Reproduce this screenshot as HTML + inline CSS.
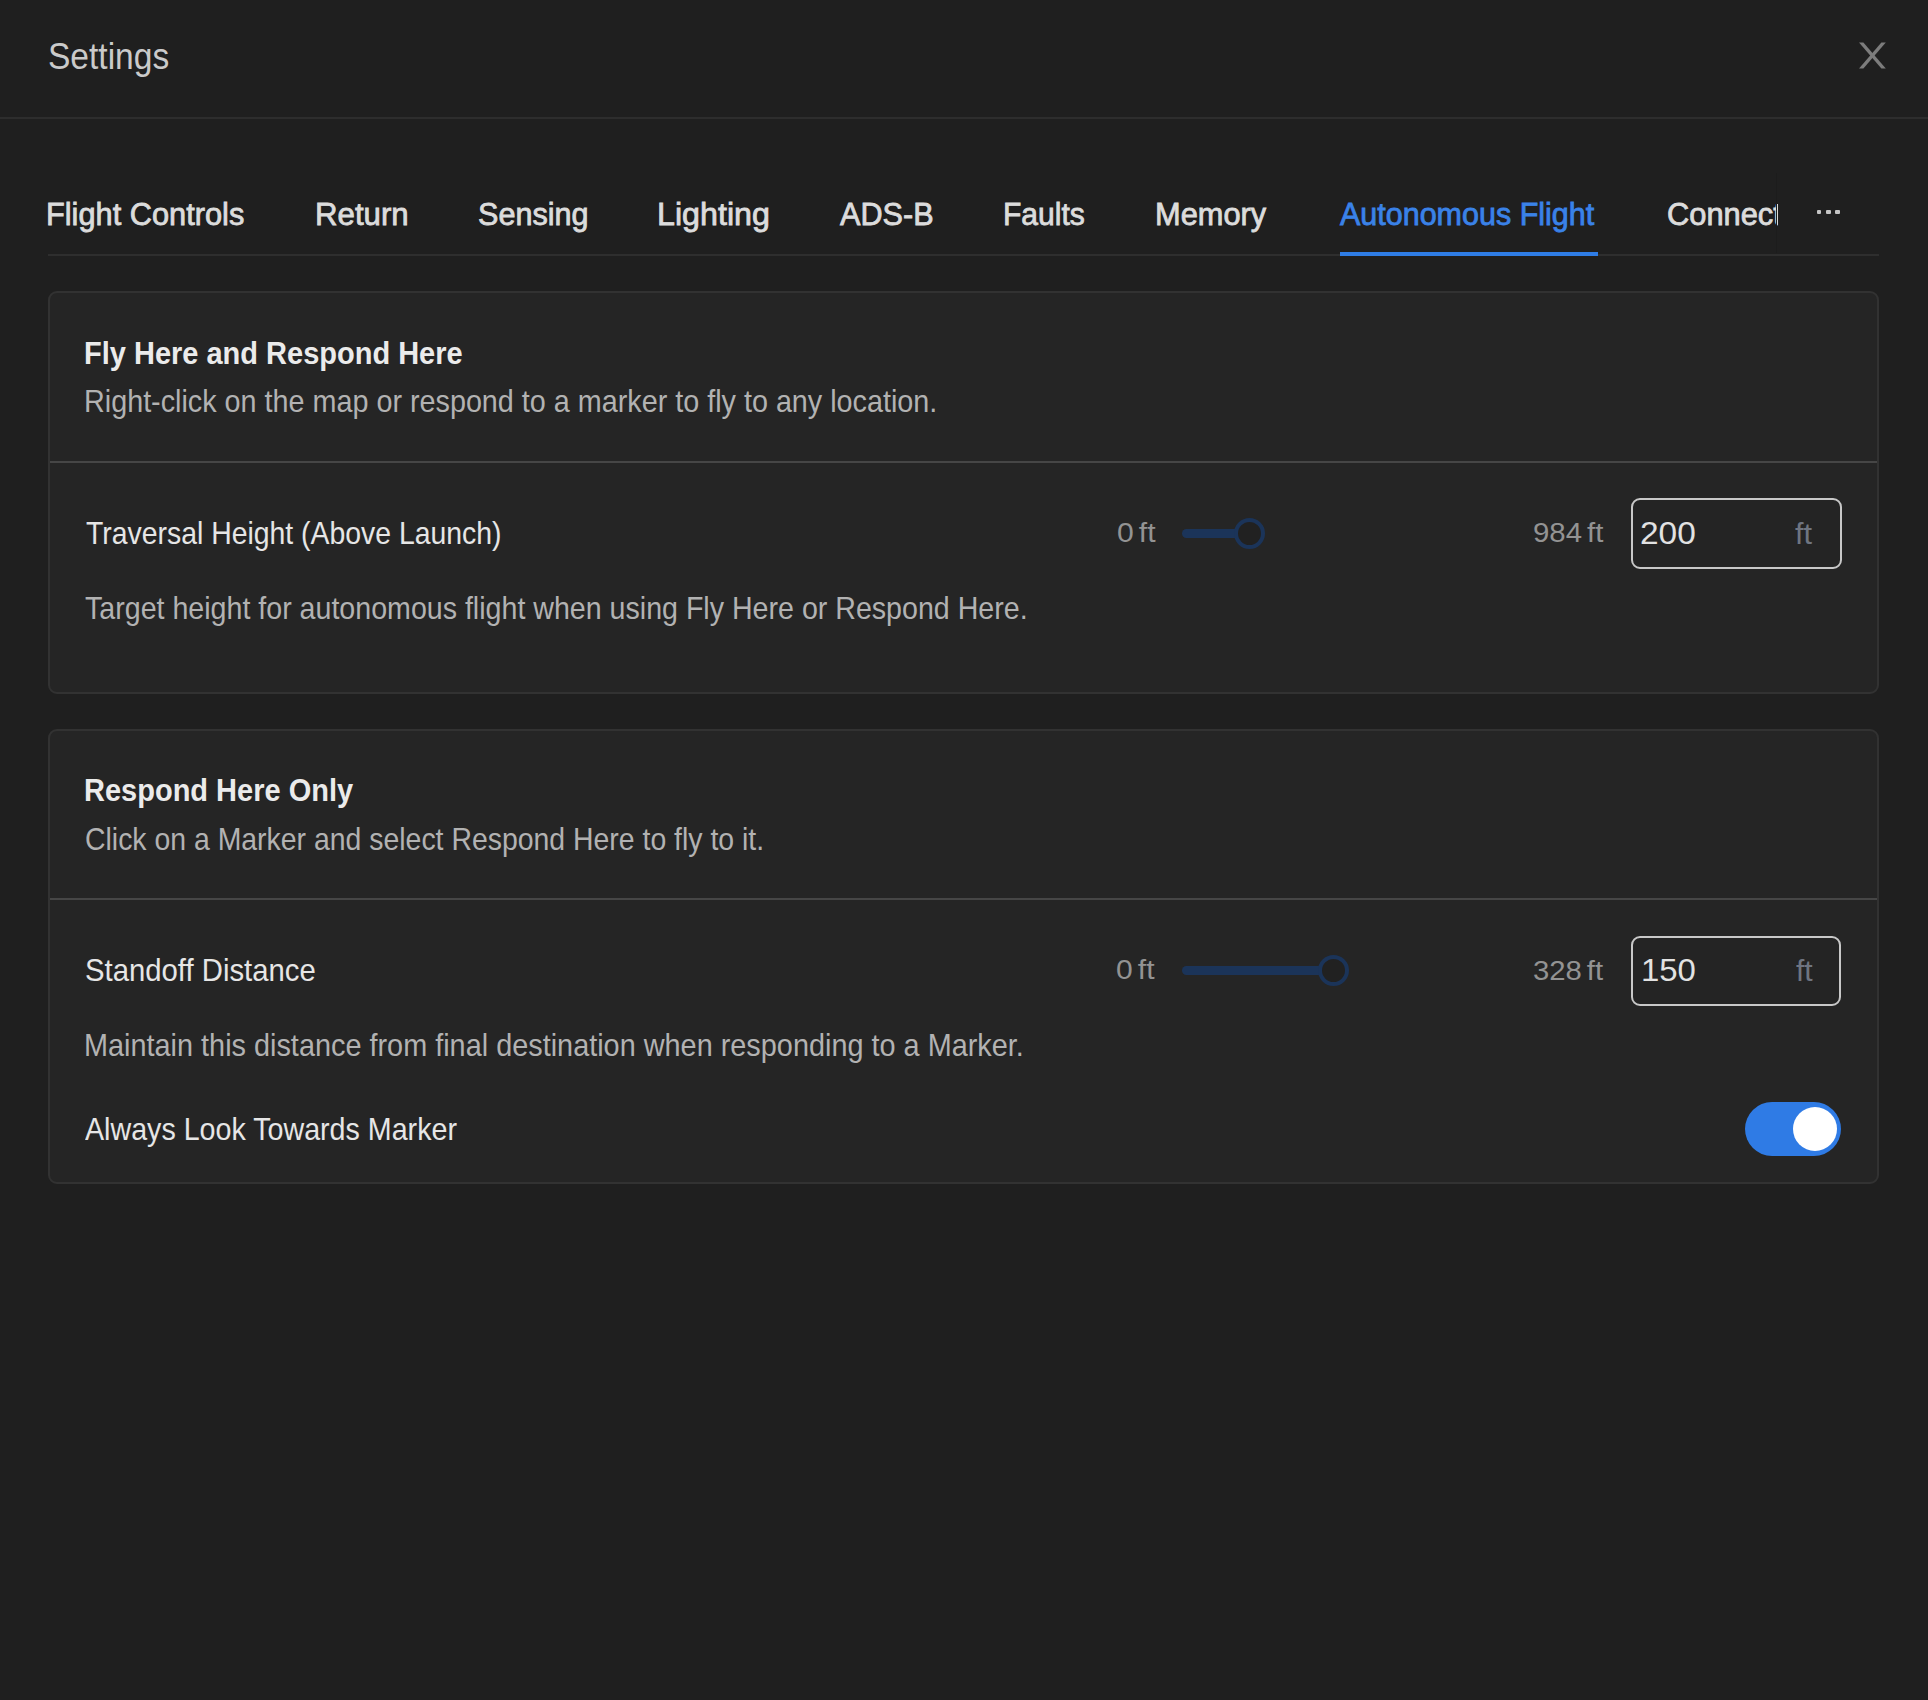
<!DOCTYPE html>
<html lang="en"><head><meta charset="utf-8"><title>Settings</title>
<style>
html,body{margin:0;padding:0;width:1928px;height:1700px;overflow:hidden;background:#1f1f1f;}
body{position:relative;font-family:"Liberation Sans",sans-serif;}
.t{position:absolute;white-space:nowrap;transform-origin:0 0;}
.abs{position:absolute;}
.card{position:absolute;box-sizing:border-box;background:#252525;border:2px solid #323232;border-radius:9px;}
.div{position:absolute;height:2px;background:#464646;}
.track{position:absolute;height:9px;border-radius:5px;background:#1b3459;}
.thumb{position:absolute;box-sizing:border-box;width:31px;height:31px;border-radius:50%;border:4.5px solid #1b3459;background:#212121;}
.input{position:absolute;box-sizing:border-box;border:2px solid #c8c8c8;border-radius:9px;background:#242424;}
</style></head>
<body>
<main style="position:absolute;left:0;top:0;width:1928px;height:1700px">
<header>
<div class="t" style="left:47.57px;top:39.3px;font-size:36px;line-height:36px;font-weight:normal;color:#cacaca;transform:scaleX(0.9315);">Settings</div>
<svg class="abs" style="left:1850px;top:34px" width="44" height="44" viewBox="1850 34 44 44">
 <path d="M1859 42.6 L1863.4 42.6 L1885.8 68.4 L1881.4 68.4 Z" fill="#7c7c7c"/>
 <path d="M1885.8 42.6 L1881.4 42.6 L1859 68.4 L1863.4 68.4 Z" fill="#7c7c7c"/>
</svg>
</header>
<div class="abs" style="left:0;top:117px;width:1928px;height:2px;background:#2d2d2d"></div>
<nav>
<div class="t" style="left:46.39px;top:199.0px;font-size:30.5px;line-height:30.5px;font-weight:normal;color:#dcdcdc;transform:scaleX(1.0083);-webkit-text-stroke:0.8px #dcdcdc;">Flight Controls</div>
<div class="t" style="left:314.96px;top:199.0px;font-size:30.5px;line-height:30.5px;font-weight:normal;color:#dcdcdc;transform:scaleX(1.0228);-webkit-text-stroke:0.8px #dcdcdc;">Return</div>
<div class="t" style="left:477.8px;top:199.0px;font-size:30.5px;line-height:30.5px;font-weight:normal;color:#dcdcdc;transform:scaleX(1.0032);-webkit-text-stroke:0.8px #dcdcdc;">Sensing</div>
<div class="t" style="left:657.31px;top:199.0px;font-size:30.5px;line-height:30.5px;font-weight:normal;color:#dcdcdc;transform:scaleX(1.0571);-webkit-text-stroke:0.8px #dcdcdc;">Lighting</div>
<div class="t" style="left:840.4px;top:199.0px;font-size:30.5px;line-height:30.5px;font-weight:normal;color:#dcdcdc;transform:scaleX(1.0036);-webkit-text-stroke:0.8px #dcdcdc;">ADS-B</div>
<div class="t" style="left:1003.42px;top:199.0px;font-size:30.5px;line-height:30.5px;font-weight:normal;color:#dcdcdc;transform:scaleX(0.9852);-webkit-text-stroke:0.8px #dcdcdc;">Faults</div>
<div class="t" style="left:1155.19px;top:199.0px;font-size:30.5px;line-height:30.5px;font-weight:normal;color:#dcdcdc;transform:scaleX(1.0092);-webkit-text-stroke:0.8px #dcdcdc;">Memory</div>
<div class="t" style="left:1340.4px;top:199.0px;font-size:30.5px;line-height:30.5px;font-weight:normal;color:#3a82e8;transform:scaleX(0.9995);-webkit-text-stroke:0.8px #3a82e8;">Autonomous Flight</div>
<div class="abs" style="left:1640px;top:180px;width:138px;height:60px;overflow:hidden"><div style="position:absolute;left:-1640px;top:-180px;width:1928px;height:300px"><div class="t" style="left:1666.99px;top:199.0px;font-size:30.5px;line-height:30.5px;font-weight:normal;color:#dcdcdc;transform:scaleX(1.0111);-webkit-text-stroke:0.8px #dcdcdc;">Connect</div></div></div>
<div class="abs" style="left:1816.5px;top:209.7px;width:4.5px;height:4.5px;background:#c4c4c4;border-radius:1px"></div>
<div class="abs" style="left:1826px;top:209.7px;width:4.5px;height:4.5px;background:#c4c4c4;border-radius:1px"></div>
<div class="abs" style="left:1835.4px;top:209.7px;width:4.5px;height:4.5px;background:#c4c4c4;border-radius:1px"></div>
<div class="abs" style="left:1776px;top:173px;width:1px;height:80px;background:#1c1c1c"></div>
<div class="abs" style="left:48px;top:253.5px;width:1831px;height:2px;background:#2e2e2e"></div>
<div class="abs" style="left:1340px;top:251.5px;width:257.5px;height:4.8px;background:#2f7de6"></div>
</nav>

<section class="card" style="left:48px;top:291px;width:1831px;height:403px"></section>
<div class="div" style="left:50px;top:460.6px;width:1827px"></div>
<div class="t" style="left:84.18px;top:337.7px;font-size:31.8px;line-height:31.8px;font-weight:bold;color:#ebebeb;transform:scaleX(0.9119);">Fly Here and Respond Here</div>
<div class="t" style="left:84.16px;top:386px;font-size:31.3px;line-height:31.3px;font-weight:normal;color:#b2b2b2;transform:scaleX(0.9186);">Right-click on the map or respond to a marker to fly to any location.</div>
<div class="t" style="left:86.0px;top:517.8px;font-size:31.5px;line-height:31.5px;font-weight:normal;color:#e6e6e6;transform:scaleX(0.9013);">Traversal Height (Above Launch)</div>
<div class="t" style="left:1116.6px;top:518.8px;font-size:27.5px;line-height:27.5px;font-weight:normal;color:#939393;transform:scaleX(1.0962);word-spacing:-3px;">0 ft</div>
<div class="track" style="left:1181.5px;top:528.5px;width:70px"></div>
<div class="thumb" style="left:1234.1px;top:517.5px"></div>
<div class="t" style="left:1533.13px;top:518.5px;font-size:27.5px;line-height:27.5px;font-weight:normal;color:#939393;transform:scaleX(1.0696);word-spacing:-3px;">984 ft</div>
<div class="input" style="left:1630.5px;top:497.5px;width:211px;height:71px"></div>
<div class="t" style="left:1640.44px;top:518.3px;font-size:31.5px;line-height:31.5px;font-weight:normal;color:#e2e2e2;transform:scaleX(1.062);">200</div>
<div class="t" style="left:1795.4px;top:519.0px;font-size:30px;line-height:30px;font-weight:normal;color:#6f7581;transform:scaleX(1.0268);">ft</div>
<div class="t" style="left:85.2px;top:592.6px;font-size:31.3px;line-height:31.3px;font-weight:normal;color:#b2b2b2;transform:scaleX(0.9137);">Target height for autonomous flight when using Fly Here or Respond Here.</div>

<section class="card" style="left:48px;top:729px;width:1831px;height:455px"></section>
<div class="div" style="left:50px;top:898.1px;width:1827px"></div>
<div class="t" style="left:83.78px;top:775.1px;font-size:31.8px;line-height:31.8px;font-weight:bold;color:#ebebeb;transform:scaleX(0.9121);">Respond Here Only</div>
<div class="t" style="left:84.69px;top:823.7px;font-size:31.3px;line-height:31.3px;font-weight:normal;color:#b2b2b2;transform:scaleX(0.9079);">Click on a Marker and select Respond Here to fly to it.</div>
<div class="t" style="left:84.57px;top:955.4px;font-size:31.5px;line-height:31.5px;font-weight:normal;color:#e6e6e6;transform:scaleX(0.93);">Standoff Distance</div>
<div class="t" style="left:1116.41px;top:956.4px;font-size:27.5px;line-height:27.5px;font-weight:normal;color:#939393;transform:scaleX(1.0933);word-spacing:-3px;">0 ft</div>
<div class="track" style="left:1181.5px;top:966.2px;width:154px"></div>
<div class="thumb" style="left:1318.1px;top:955.2px"></div>
<div class="t" style="left:1533.43px;top:956.6px;font-size:27.5px;line-height:27.5px;font-weight:normal;color:#939393;transform:scaleX(1.065);word-spacing:-3px;">328 ft</div>
<div class="input" style="left:1630.8px;top:935.8px;width:210.5px;height:69.8px"></div>
<div class="t" style="left:1641.11px;top:955.4px;font-size:31.5px;line-height:31.5px;font-weight:normal;color:#e2e2e2;transform:scaleX(1.0452);">150</div>
<div class="t" style="left:1795.6px;top:956.2px;font-size:30px;line-height:30px;font-weight:normal;color:#6f7581;transform:scaleX(1.0038);">ft</div>
<div class="t" style="left:83.56px;top:1030.4px;font-size:31.3px;line-height:31.3px;font-weight:normal;color:#b2b2b2;transform:scaleX(0.9219);">Maintain this distance from final destination when responding to a Marker.</div>
<div class="t" style="left:84.9px;top:1114.1px;font-size:31.5px;line-height:31.5px;font-weight:normal;color:#e6e6e6;transform:scaleX(0.9092);">Always Look Towards Marker</div>
<div class="abs" style="left:1745px;top:1102px;width:96px;height:54px;border-radius:27px;background:#2f7be5"></div>
<div class="abs" style="left:1792.7px;top:1106.8px;width:44.5px;height:44.5px;border-radius:50%;background:#ffffff"></div>
</main>
</body></html>
